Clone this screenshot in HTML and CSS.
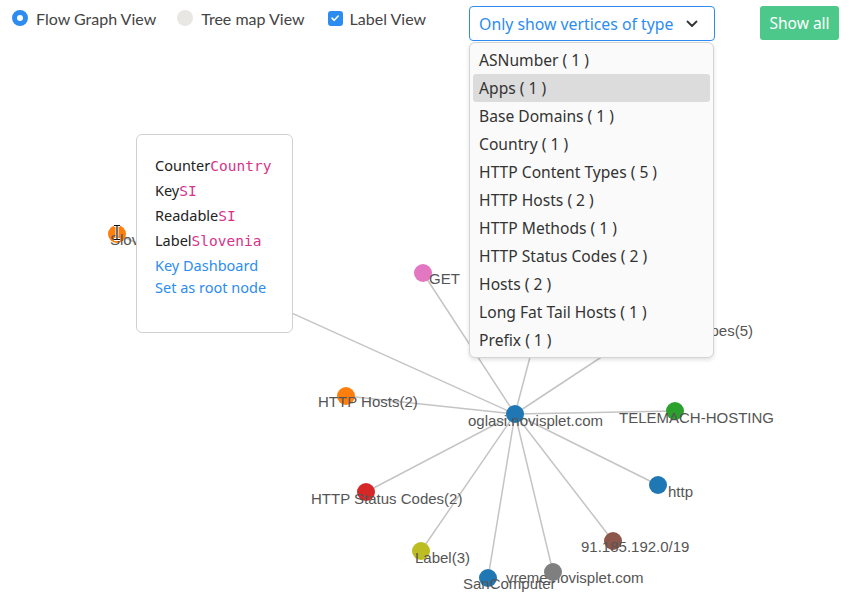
FILE: index.html
```html
<!DOCTYPE html>
<html>
<head>
<meta charset="utf-8">
<link rel="stylesheet" href="styles.css">
</head>
<body>
<div class="page">
  <svg class="graph" width="849" height="598" viewBox="0 0 849 598">
    <g class="links">
      <line x1="515" y1="414" x2="117" y2="234"/>
      <line x1="515" y1="414" x2="423" y2="273"/>
      <line x1="515" y1="414" x2="545" y2="300"/>
      <line x1="515" y1="414" x2="650" y2="325"/>
      <line x1="515" y1="414" x2="346" y2="396"/>
      <line x1="515" y1="414" x2="675" y2="411"/>
      <line x1="515" y1="414" x2="658" y2="485"/>
      <line x1="515" y1="414" x2="613" y2="541"/>
      <line x1="515" y1="414" x2="553" y2="572"/>
      <line x1="515" y1="414" x2="488" y2="578"/>
      <line x1="515" y1="414" x2="421" y2="551"/>
      <line x1="515" y1="414" x2="366" y2="492"/>
    </g>
    <g class="nodes">
      <circle cx="117" cy="234" r="9" fill="#ff7f0e"/>
      <text x="110" y="245">Slovenia</text>
      <circle cx="423" cy="273" r="9" fill="#e377c2"/>
      <text x="429" y="284">GET</text>
      <circle cx="650" cy="325" r="9" fill="#9467bd"/>
      <text x="753" y="336" text-anchor="end">HTTP Content Types(5)</text>
      <circle cx="346" cy="396" r="9" fill="#ff7f0e"/>
      <text x="318" y="407">HTTP Hosts(2)</text>
      <circle cx="675" cy="411" r="9" fill="#2ca02c"/>
      <text x="619" y="423">TELEMACH-HOSTING</text>
      <circle cx="658" cy="485" r="9" fill="#1f77b4"/>
      <text x="668" y="497">http</text>
      <circle cx="366" cy="492" r="9" fill="#d62728"/>
      <text x="311" y="504">HTTP Status Codes(2)</text>
      <circle cx="613" cy="541" r="9" fill="#8c564b"/>
      <text x="581" y="552">91.185.192.0/19</text>
      <circle cx="421" cy="551" r="9" fill="#bcbd22"/>
      <text x="415" y="563">Label(3)</text>
      <text x="506" y="583">vreme.novisplet.com</text>
      <circle cx="553" cy="572" r="9" fill="#7f7f7f"/>
      <circle cx="488" cy="578" r="9" fill="#1f77b4"/>
      <text x="463" y="589">SanComputer</text>
      <circle cx="515" cy="414" r="9" fill="#1f77b4"/>
      <text x="468" y="426">oglasi.novisplet.com</text>
    </g>
    <g class="cursor">
      <path d="M114 225.5h6M117 225.5v14M114 239.5h6" stroke="#fff" stroke-width="3"/>
      <path d="M114 225.5h6M117 225.5v14M114 239.5h6" stroke="#111" stroke-width="1.2"/>
    </g>
  </svg>

  <div class="toolbar">
    <label class="opt opt-first">
      <span class="radio radio-on"></span>
      <span>Flow Graph View</span>
    </label>
    <label class="opt">
      <span class="radio radio-off"></span>
      <span>Tree map View</span>
    </label>
    <label class="opt">
      <span class="check">
        <svg width="14" height="14" viewBox="0 0 14 14"><path d="M4 7.2l2.2 2.1L10.2 5" fill="none" stroke="#fff" stroke-width="1.6" stroke-linecap="round" stroke-linejoin="round"/></svg>
      </span>
      <span>Label View</span>
    </label>

    <div class="select-wrap">
      <div class="select">
        <span class="select-text">Only show vertices of type</span>
        <svg class="chev" width="12" height="8" viewBox="0 0 12 8"><path d="M1.5 1.5l4.5 4.5 4.5-4.5" fill="none" stroke="#333" stroke-width="1.8" stroke-linecap="round" stroke-linejoin="round"/></svg>
      </div>
      <ul class="menu">
        <li>ASNumber ( 1 )</li>
        <li class="active">Apps ( 1 )</li>
        <li>Base Domains ( 1 )</li>
        <li>Country ( 1 )</li>
        <li>HTTP Content Types ( 5 )</li>
        <li>HTTP Hosts ( 2 )</li>
        <li>HTTP Methods ( 1 )</li>
        <li>HTTP Status Codes ( 2 )</li>
        <li>Hosts ( 2 )</li>
        <li>Long Fat Tail Hosts ( 1 )</li>
        <li>Prefix ( 1 )</li>
      </ul>
    </div>

    <button class="btn-show">Show all</button>
  </div>

  <div class="tip">
    <div class="tip-row">Counter<code>Country</code></div>
    <div class="tip-row">Key<code>SI</code></div>
    <div class="tip-row">Readable<code>SI</code></div>
    <div class="tip-row">Label<code>Slovenia</code></div>
    <a class="tip-link">Key Dashboard</a>
    <a class="tip-link">Set as root node</a>
  </div>
</div>
</body>
</html>
```

FILE: styles.css
```css
* { box-sizing: border-box; }
html, body { margin: 0; padding: 0; background: #fff; }
body { width: 849px; height: 598px; overflow: hidden; }

.page {
  position: relative;
  width: 849px;
  height: 598px;
  font-family: Lato, "Noto Sans", sans-serif;
}

.graph {
  position: absolute;
  left: 0;
  top: 0;
}
.links line { stroke: #c4c4c4; stroke-width: 1.5; }
.nodes text {
  font-family: "Liberation Sans", Arial, sans-serif;
  font-size: 15px;
  fill: #555;
}

.toolbar {
  position: relative;
  display: flex;
  align-items: flex-start;
  padding: 6px 0 0 12px;
}

.opt {
  display: flex;
  align-items: center;
  height: 24px;
  gap: 8px;
  margin-right: 21px;
  font-size: 16px;
  color: #444;
}
.radio {
  width: 16px;
  height: 16px;
  border-radius: 50%;
  display: inline-block;
}
.radio-on { background: #fff; border: 5px solid #2d8cf0; }
.radio-off { background: #e9e7e4; }
.check {
  width: 15px;
  height: 15px;
  border-radius: 3px;
  background: #2d8cf0;
  display: flex;
  align-items: center;
  justify-content: center;
  margin-left: 2px;
  margin-right: -1px;
}
.check svg { display: block; }

.select-wrap {
  position: relative;
  margin-left: 22px;
  z-index: 2;
}
.select {
  width: 246px;
  height: 35px;
  border: 1px solid #2d8cf0;
  border-radius: 4px;
  background: #fff;
  display: flex;
  align-items: center;
  padding: 0 16px 0 9px;
  justify-content: space-between;
}
.select-text {
  color: #2d8cf0;
  font-family: "Noto Sans", sans-serif;
  font-size: 15.8px;
}
.chev { display: block; }

.menu {
  position: absolute;
  left: 0;
  top: 36px;
  width: 245px;
  margin: 0;
  padding: 3px 3px;
  list-style: none;
  background: #fafafa;
  border: 1px solid #d4d4d4;
  border-radius: 6px;
  box-shadow: 0 2px 4px rgba(0,0,0,0.12);
}
.menu li {
  height: 28px;
  line-height: 28px;
  padding-left: 6px;
  font-family: "Noto Sans", sans-serif;
  font-size: 15.6px;
  color: #333;
  border-radius: 3px;
}
.menu li.active { background: #dcdcdc; }

.btn-show {
  margin-left: 45px;
  width: 79px;
  height: 34px;
  border: none;
  border-radius: 3px;
  background: #4cc98a;
  color: #fff;
  font-family: "Noto Sans", sans-serif;
  font-size: 15.5px;
  padding: 0;
}

.tip {
  position: absolute;
  left: 136px;
  top: 134px;
  width: 157px;
  height: 199px;
  background: #fff;
  border: 1px solid #d0d0d0;
  border-radius: 6px;
  padding: 18px 0 0 18px;
  font-family: "Noto Sans", sans-serif;
  font-size: 14.5px;
  color: #222;
}
.tip-row { height: 25px; line-height: 25px; }
.tip-row code {
  font-family: "DejaVu Sans Mono", "Liberation Mono", monospace;
  font-size: 14.5px;
  color: #d6338a;
}
.tip-link {
  display: block;
  height: 22px;
  line-height: 22px;
  color: #2d8cf0;
  font-size: 14.5px;
}
.tip-link:first-of-type { margin-top: 1px; }
```
